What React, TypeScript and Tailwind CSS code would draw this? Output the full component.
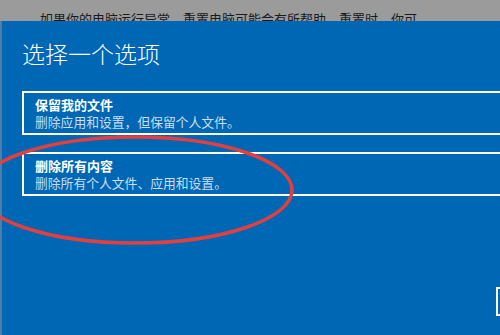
export default function App() {
  const options = [
    { title: "保留我的文件", desc: "删除应用和设置，但保留个人文件。" },
    { title: "删除所有内容", desc: "删除所有个人文件、应用和设置。" },
  ];

  return (
    <div
      className="relative w-[500px] h-[335px] overflow-hidden bg-[#0067b4] flex flex-col"
      style={{ fontFamily: '"Noto Sans CJK SC", "Noto Sans", sans-serif' }}
    >
      {/* grey page behind the dialog */}
      <div className="h-[21px] shrink-0 bg-[#9b9b9b] overflow-hidden pl-[40px] pt-[11px]">
        <p className="text-[13px] leading-[16px] text-[#1a1a1a] whitespace-nowrap">
          如果你的电脑运行异常，重置电脑可能会有所帮助。重置时，你可
        </p>
      </div>

      {/* dialog */}
      <div className="flex-1 border-l-[2px] border-[#4d7fab] pl-[20px] flex flex-col">
        <h1 className="mt-[17px] text-[23px] leading-[30px] font-light text-white">选择一个选项</h1>

        <div className="mt-[23px] flex flex-col gap-[17px] -mr-[10px]">
          {options.map((o) => (
            <div key={o.title} className="h-[44px] border-[2px] border-white pl-[11px] pt-[4px]">
              <p className="text-[13px] leading-[16px] font-bold text-white">{o.title}</p>
              <p className="text-[12.8px] leading-[17px] text-[#c9def0]">{o.desc}</p>
            </div>
          ))}
        </div>
      </div>

      {/* partially visible button at the lower right */}
      <div className="absolute left-[496px] top-[287px] w-[30px] h-[29px] border-[2px] border-white" />

      {/* red annotation ellipse */}
      <svg className="absolute left-0 top-0 pointer-events-none" width="500" height="335">
        <ellipse cx="135" cy="190" rx="157" ry="53" fill="none" stroke="#e2403f" strokeWidth="3.5" />
      </svg>
    </div>
  );
}
